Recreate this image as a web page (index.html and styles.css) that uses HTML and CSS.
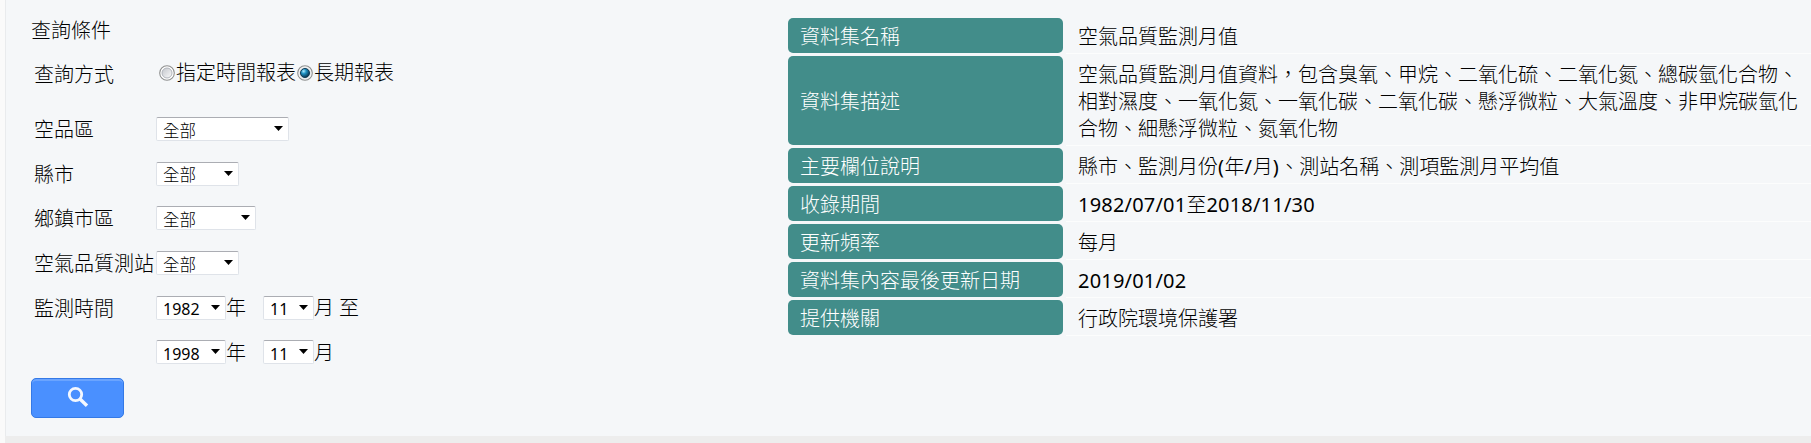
FILE: index.html
```html
<!DOCTYPE html>
<html lang="zh-Hant">
<head>
<meta charset="utf-8">
<title>查詢條件</title>
<link rel="stylesheet" href="styles.css">
</head>
<body>
<main class="panel">
  <section class="query">
    <h1 class="heading">查詢條件</h1>
    <div class="row row-mode">
      <span class="label">查詢方式</span>
      <span class="radios">
        <svg class="radio" width="16" height="16" viewBox="0 0 16 16"><circle cx="8" cy="8" r="7.3" fill="#fff" stroke="#8e8f8f" stroke-width="1.1"/><circle cx="8" cy="8" r="5" fill="url(#off)" stroke="#b0b4bb"/></svg><span>指定時間報表</span><svg class="radio radio-on" width="16" height="16" viewBox="0 0 16 16"><defs><linearGradient id="off" x2="1" y2="1"><stop stop-color="#c3c6cc"/><stop offset="1" stop-color="#fafafa"/></linearGradient><radialGradient id="on" cx=".35" cy=".3" r=".7"><stop stop-color="#b5ecff"/><stop offset=".4" stop-color="#2093c4"/><stop offset="1" stop-color="#0b3550"/></radialGradient></defs><circle cx="8" cy="8" r="7.3" fill="#f6f6f6" stroke="#8e8f8f" stroke-width="1.1"/><circle cx="8" cy="8" r="5.6" fill="#d4dade"/><circle cx="8" cy="8" r="4.5" fill="url(#on)" stroke="#123c56"/></svg><span>長期報表</span>
      </span>
    </div>
    <div class="row"><span class="label">空品區</span><span class="select w-area">全部<svg class="arrow" width="9" height="5"><path d="M0 0h9L4.5 5z"/></svg></span></div>
    <div class="row"><span class="label">縣市</span><span class="select w-city">全部<svg class="arrow" width="9" height="5"><path d="M0 0h9L4.5 5z"/></svg></span></div>
    <div class="row"><span class="label">鄉鎮市區</span><span class="select w-town">全部<svg class="arrow" width="9" height="5"><path d="M0 0h9L4.5 5z"/></svg></span></div>
    <div class="row"><span class="label">空氣品質測站</span><span class="select w-city">全部<svg class="arrow" width="9" height="5"><path d="M0 0h9L4.5 5z"/></svg></span></div>
    <div class="row">
      <span class="label">監測時間</span>
      <span class="select number w-year">1982<svg class="arrow" width="9" height="5"><path d="M0 0h9L4.5 5z"/></svg></span><span class="unit unit-year">年</span>
      <span class="select number w-month">11<svg class="arrow" width="9" height="5"><path d="M0 0h9L4.5 5z"/></svg></span><span class="unit">月</span><span class="to">至</span>
    </div>
    <div class="row">
      <span class="label"></span>
      <span class="select number w-year">1998<svg class="arrow" width="9" height="5"><path d="M0 0h9L4.5 5z"/></svg></span><span class="unit unit-year">年</span>
      <span class="select number w-month">11<svg class="arrow" width="9" height="5"><path d="M0 0h9L4.5 5z"/></svg></span><span class="unit">月</span>
    </div>
    <button class="search" type="button" aria-label="查詢"><svg width="22" height="22" viewBox="0 0 22 22" fill="none" stroke="#f4f8ff" stroke-width="2.8"><circle cx="8.5" cy="8.5" r="6.2"/><path d="M13 13l7 6.8" stroke-width="3.4"/></svg></button>
  </section>
  <dl class="info">
    <dt>資料集名稱</dt><dd>空氣品質監測月值</dd>
    <dt>資料集描述</dt><dd>空氣品質監測月值資料，包含臭氧、甲烷、二氧化硫、二氧化氮、總碳氫化合物、<br>相對濕度、一氧化氮、一氧化碳、二氧化碳、懸浮微粒、大氣溫度、非甲烷碳氫化<br>合物、細懸浮微粒、氮氧化物</dd>
    <dt>主要欄位說明</dt><dd>縣市、監測月份<span class="latin">(</span>年<span class="latin">/</span>月<span class="latin">)</span>、測站名稱、測項監測月平均值</dd>
    <dt>收錄期間</dt><dd><span class="date">1982/07/01</span>至<span class="date">2018/11/30</span></dd>
    <dt>更新頻率</dt><dd>每月</dd>
    <dt>資料集內容最後更新日期</dt><dd><span class="date">2019/01/02</span></dd>
    <dt>提供機關</dt><dd>行政院環境保護署</dd>
  </dl>
</main>
</body>
</html>
```
FILE: styles.css
```css
* { box-sizing: border-box; }
body {
  margin: 0;
  height: 443px;
  overflow: hidden;
  padding-left: 5px;
  background: linear-gradient(to right, #fafafa 5px, #ededed 5px);
  font: 300 20px/27px "Noto Sans", "Noto Sans CJK TC", sans-serif;
  color: #000;
}
.panel {
  display: flex;
  height: 436px;
  background: #f5f7f9;
  border-left: 1px solid #e9ebed;
}
.query { width: 782px; padding: 17px 0 0 25px; }
.heading { margin: 0 0 8px; font: inherit; height: 27px; white-space: nowrap; }
.row { display: flex; align-items: center; height: 44.7px; padding-left: 3px; white-space: nowrap; }
.row-mode { margin-bottom: 10px; }
.label { width: 122px; flex: none; padding-top: 1px; }
.radios { display: flex; align-items: center; padding: 0 0 3px 3px; }
.radio { flex: none; margin-right: 1px; }
.radio-on { margin-left: 1px; }
.select {
  display: flex;
  align-items: center;
  justify-content: space-between;
  height: 24px;
  padding: 3px 5px 0 6px;
  background: #fff;
  border: 1px solid #dfe3e9;
  border-top-color: #abadb3;
  border-radius: 2px;
  font-size: 16.5px;
  line-height: 20px;
}
.number { font-size: 16px; font-weight: 400; }
.arrow { margin-top: -4px; fill: #000; }
.w-area { width: 133px; }
.w-city { width: 83px; }
.w-town { width: 100px; }
.w-year { width: 70px; }
.w-month { width: 51px; }
.unit-year { width: 37px; }
.to { margin-left: 5px; }
.search {
  display: flex;
  align-items: center;
  justify-content: center;
  width: 93px;
  height: 40px;
  margin-top: 3px;
  padding: 0 0 2px;
  border: 1px solid #3479e6;
  border-radius: 5px;
  background: #4a90ff;
  box-shadow: inset 0 2px 0 #6aa4ff;
}
.info {
  display: grid;
  grid-template-columns: 275px 1fr;
  grid-template-rows: 35px 89px repeat(5, 35px);
  gap: 3px;
  flex: 1;
  margin: 18px 0 0;
  align-content: start;
  white-space: nowrap;
}
.info dt {
  display: flex;
  align-items: center;
  padding: 2px 0 0 12px;
  border-radius: 5px;
  background: #428d8a;
  color: #fff;
}
.info dd {
  display: flex;
  align-items: center;
  margin: 0;
  padding: 2px 0 0 12px;
  box-shadow: 0 1px 0 #fcfdfd;
}
.info dd:nth-of-type(2) { display: block; padding-top: 5px; }
.latin { font-weight: 400; letter-spacing: .6px; }
.date { font-weight: 400; letter-spacing: .2px; }
```
